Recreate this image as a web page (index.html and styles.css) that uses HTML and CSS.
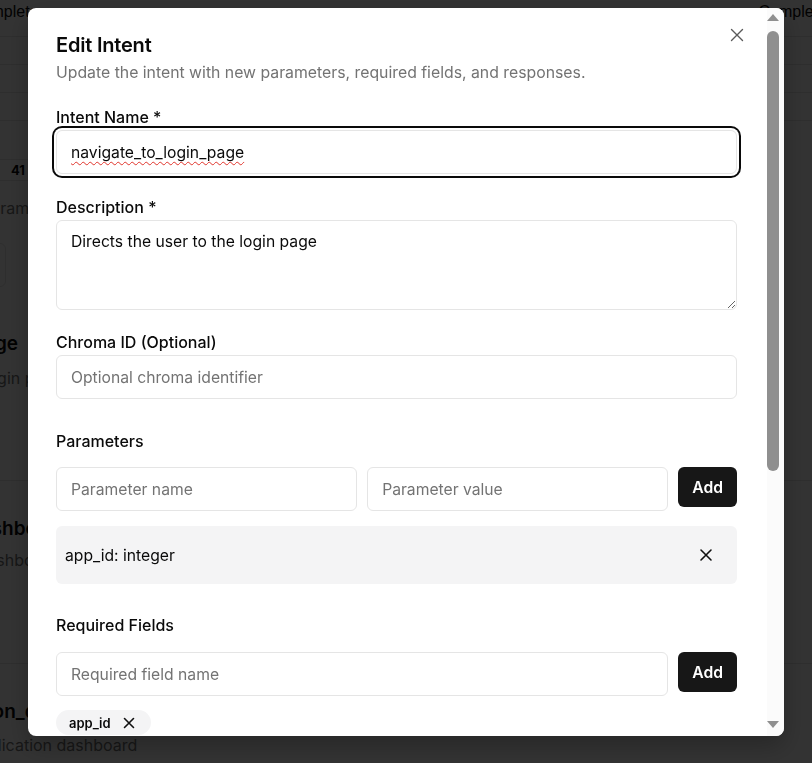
FILE: index.html
```html
<!DOCTYPE html>
<html lang="en">
<head>
<meta charset="utf-8">
<title>Edit Intent</title>
<link rel="stylesheet" href="styles.css">
</head>
<body>
<div class="page">
  <div class="ph"><span class="ph-l">Complete</span><span class="ph-r">Complete</span></div>
  <div class="pr"></div>
  <div class="pr"></div>
  <div class="pr"></div>
  <div class="stat"><span class="pill">41</span></div>
  <div class="plabel">Parameters</div>
  <div class="pbox"></div>
  <div class="pcard c1">
    <div class="pname">navigate_to_login_page</div>
    <div class="pdesc">Directs the user to the login page</div>
  </div>
  <div class="psep s1"></div>
  <div class="pcard c2">
    <div class="pname">navigate_to_dashboard</div>
    <div class="pdesc">Navigates to the dashboard</div>
  </div>
  <div class="psep s2"></div>
  <div class="pcard c3">
    <div class="pname">open_application_dashboard</div>
    <div class="pdesc">Opens the application dashboard</div>
  </div>
</div>
<div class="overlay"></div>

<div class="modal" role="dialog">
  <div class="modal-body">
    <h2 class="title">Edit Intent</h2>
    <p class="subtitle">Update the intent with new parameters, required fields, and responses.</p>

    <div class="field first">
      <label class="label">Intent Name *</label>
      <div class="input-wrap">
        <input class="input focused" value="navigate_to_login_page">
        <span class="squiggle" aria-hidden="true">navigate_to_login_page</span>
      </div>
    </div>
    <div class="field">
      <label class="label">Description *</label>
      <textarea class="input textarea">Directs the user to the login page</textarea>
    </div>
    <div class="field third">
      <label class="label">Chroma ID (Optional)</label>
      <input class="input" placeholder="Optional chroma identifier">
    </div>

    <div class="section s-params">
      <div class="label sec-label">Parameters</div>
      <div class="row">
        <input class="input grow" placeholder="Parameter name">
        <input class="input grow" placeholder="Parameter value">
        <button class="add">Add</button>
      </div>
      <div class="item">
        <span>app_id: integer</span>
        <button class="item-x" aria-label="Remove">
          <svg width="14" height="14" viewBox="0 0 14 14" fill="none" stroke="#111" stroke-width="1.6" stroke-linecap="round"><path d="M2 2l10 10M12 2L2 12"/></svg>
        </button>
      </div>
    </div>

    <div class="section s-req">
      <div class="label sec-label">Required Fields</div>
      <div class="row">
        <input class="input grow" placeholder="Required field name">
        <button class="add">Add</button>
      </div>
      <div class="chips">
        <span class="chip">app_id
          <svg width="12" height="12" viewBox="0 0 12 12" fill="none" stroke="#111" stroke-width="1.6" stroke-linecap="round"><path d="M1.5 1.5l9 9M10.5 1.5l-9 9"/></svg>
        </span>
      </div>
    </div>

    <div class="section">
      <div class="label sec-label">Responses</div>
      <textarea class="input textarea" placeholder="Response text"></textarea>
      <div class="resp-actions"><button class="add">Add Response</button></div>
      <div class="item">
        <span>Sure, taking you to the login page now.</span>
        <button class="item-x" aria-label="Remove">
          <svg width="14" height="14" viewBox="0 0 14 14" fill="none" stroke="#111" stroke-width="1.6" stroke-linecap="round"><path d="M2 2l10 10M12 2L2 12"/></svg>
        </button>
      </div>
    </div>

    <div class="footer">
      <button class="btn-outline">Cancel</button>
      <button class="add">Save Changes</button>
    </div>
  </div>

  <div class="scrollbar" aria-hidden="true">
    <span class="arrow up"></span>
    <span class="thumb"></span>
    <span class="arrow down"></span>
  </div>

  <button class="close" aria-label="Close">
    <svg width="16" height="16" viewBox="0 0 16 16" fill="none" stroke="#5a5a5a" stroke-width="1.4" stroke-linecap="round"><path d="M2.5 2.5l11 11M13.5 2.5l-11 11"/></svg>
  </button>
</div>
</body>
</html>
```

FILE: styles.css
```css
* { box-sizing: border-box; }
html, body { margin: 0; height: 100%; }
body {
  font-family: Inter, "Noto Sans", sans-serif;
  color: #0a0a0a;
  background: #fff;
  overflow: hidden;
}

/* background page */
.page {
  width: 812px;
  height: 763px;
  font-family: "Liberation Sans", Arial, sans-serif;
  overflow: hidden;
}
.ph {
  display: flex;
  justify-content: space-between;
  height: 37px;
  padding-top: 3px;
  border-bottom: 1px solid #e5e5e5;
  font-size: 16px;
  line-height: 18px;
  white-space: nowrap;
}
.ph-l { margin-left: -30px; }
.ph-r { margin-right: -15px; }
.pr { height: 28px; border-bottom: 1px solid #e5e5e5; }
.stat { margin-top: 38px; }
.pill {
  display: inline-block;
  margin-left: -10px;
  padding: 2px 12px 2px 20px;
  border: 1px solid #e5e5e5;
  border-radius: 999px;
  font-family: Inter, sans-serif;
  font-weight: 700;
  font-size: 13px;
}
.plabel {
  margin-top: 17px;
  margin-left: -19px;
  font-size: 16px;
  line-height: 20px;
  color: #737373;
  font-family: Inter, sans-serif;
}
.pbox {
  margin-top: 25px;
  margin-left: -40px;
  width: 46px;
  height: 44px;
  border: 1px solid #e5e5e5;
  border-radius: 6px;
}
.pcard { font-family: Inter, sans-serif; white-space: nowrap; }
.pname { font-size: 19px; font-weight: 600; line-height: 24px; }
.pdesc { font-size: 16px; color: #737373; line-height: 22px; }
.c1 { margin-top: 45px; margin-left: -198px; }
.c1 .pdesc { margin-top: 11px; margin-left: 10px; }
.psep { border-bottom: 1px solid #e5e5e5; }
.s1 { height: 92px; }
.s2 { height: 93px; }
.c2 { margin-top: 36px; margin-left: -146px; }
.c2 .pdesc { margin-top: 8px; margin-left: -4px; }
.c3 { margin-top: 36px; margin-left: -141px; }
.c3 .pdesc { margin-top: 10px; margin-left: 28px; }

.overlay {
  position: fixed;
  inset: 0;
  background: rgba(0, 0, 0, 0.8);
}

/* modal */
.modal {
  position: fixed;
  left: 28px;
  top: 8px;
  width: 756px;
  height: 728px;
  background: #fff;
  border-radius: 8px;
  overflow: hidden;
  display: flex;
  box-shadow: 0 10px 25px rgba(0, 0, 0, 0.25);
}
.modal-body {
  flex: 1;
  min-width: 0;
  height: 100%;
  overflow-y: auto;
  scrollbar-width: none;
  padding: 23px 30px 28px 28px;
}
.modal-body::-webkit-scrollbar { display: none; }

.scrollbar {
  flex: none;
  width: 17px;
  background: #fbfbfb;
  display: flex;
  flex-direction: column;
  align-items: flex-start;
  padding: 6px 0 8px 0;
}
.arrow {
  width: 0;
  height: 0;
  margin-left: 0;
  border-left: 6px solid transparent;
  border-right: 6px solid transparent;
}
.arrow.up { border-bottom: 7px solid #8f8f8f; }
.arrow.down { border-top: 7px solid #8f8f8f; margin-top: auto; }
.thumb {
  display: block;
  width: 12px;
  height: 440px;
  margin-top: 10px;
  border-radius: 6px;
  background: #8f8f8f;
}

.close {
  position: absolute;
  top: 19px;
  right: 39px;
  width: 16px;
  height: 16px;
  padding: 0;
  border: 0;
  background: none;
  display: flex;
}
.title {
  margin: 0;
  font-size: 20px;
  line-height: 28px;
  font-weight: 600;
  letter-spacing: -0.2px;
}
.subtitle {
  margin: 3px 0 0;
  font-size: 15.8px;
  line-height: 22px;
  color: #737373;
}
.field { margin-top: 23px; }
.field.third { margin-top: 22px; }
.label {
  display: block;
  font-size: 16px;
  line-height: 20px;
  font-weight: 500;
  margin-bottom: 3px;
}
.input-wrap { position: relative; }
.input {
  display: block;
  width: 100%;
  height: 44px;
  border: 1px solid #e5e5e5;
  border-radius: 6px;
  padding: 0 14px;
  font-family: Inter, sans-serif;
  font-size: 15.7px;
  color: #0a0a0a;
  background: #fff;
  outline: none;
}
.input::placeholder { color: #737373; }
.focused {
  box-shadow: 0 0 0 2px #fff, 0 0 0 4px #0a0a0a;
}
.squiggle {
  position: absolute;
  left: 15px;
  top: 12px;
  font-size: 15.7px;
  line-height: 20px;
  color: transparent;
  text-decoration: underline wavy #e0342b;
  text-decoration-thickness: 1px;
  text-underline-offset: 4px;
  pointer-events: none;
  white-space: nowrap;
}
.textarea {
  height: 90px;
  padding: 10px 14px;
  line-height: 22px;
  resize: vertical;
}
.section { margin-top: 31px; }
.s-params { margin-top: 32px; }
.sec-label { margin-bottom: 16px; }
.s-req .sec-label { margin-bottom: 17px; }
.row {
  display: flex;
  gap: 10px;
  align-items: flex-start;
}
.grow { flex: 1; min-width: 0; }
.add {
  height: 40px;
  padding: 0 14px;
  border: 0;
  border-radius: 6px;
  background: #171717;
  color: #fff;
  font-family: Inter, sans-serif;
  font-size: 15.7px;
  font-weight: 600;
  flex: none;
}
.item {
  margin-top: 15px;
  height: 58px;
  display: flex;
  align-items: center;
  justify-content: space-between;
  background: #f4f4f5;
  border-radius: 6px;
  padding: 0 11px 0 9px;
  font-size: 15.7px;
}
.item-x {
  width: 40px;
  height: 40px;
  border: 0;
  background: none;
  display: flex;
  align-items: center;
  justify-content: center;
  padding: 0;
}
.chips { margin-top: 14px; display: flex; gap: 8px; }
.chip {
  display: inline-flex;
  align-items: center;
  gap: 12px;
  height: 25px;
  padding: 0 16px 0 13px;
  border-radius: 999px;
  background: #f4f4f5;
  font-size: 13px;
  font-weight: 600;
}
.resp-actions { margin-top: 12px; display: flex; justify-content: flex-end; }
.footer {
  margin-top: 32px;
  display: flex;
  justify-content: flex-end;
  gap: 10px;
  padding-bottom: 12px;
}
.btn-outline {
  height: 40px;
  padding: 0 16px;
  border: 1px solid #e5e5e5;
  border-radius: 6px;
  background: #fff;
  font-family: Inter, sans-serif;
  font-size: 15.7px;
  font-weight: 500;
}
```
